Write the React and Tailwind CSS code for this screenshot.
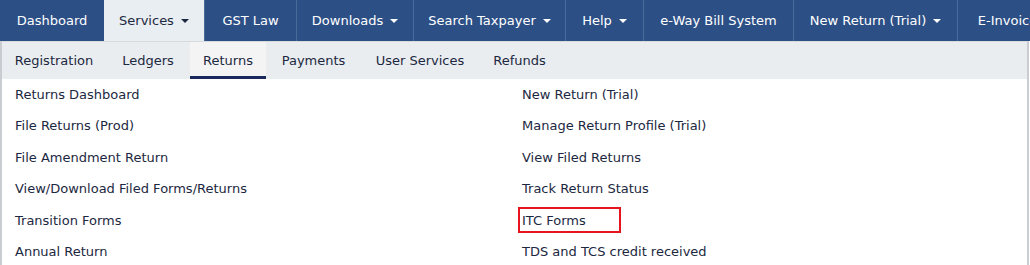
import React from 'react';

const navItems = [
  { label: 'Dashboard', w: 104 },
  { label: 'Services', w: 100, caret: true, active: true },
  { label: 'GST Law', w: 92 },
  { label: 'Downloads', w: 117, caret: true },
  { label: 'Search Taxpayer', w: 152, caret: true },
  { label: 'Help', w: 78, caret: true },
  { label: 'e-Way Bill System', w: 150 },
  { label: 'New Return (Trial)', w: 164, caret: true },
  { label: 'E-Invoice', w: 100 },
];

const tabs = [
  { label: 'Registration', w: 104 },
  { label: 'Ledgers', w: 84 },
  { label: 'Returns', w: 76, active: true },
  { label: 'Payments', w: 95 },
  { label: 'User Services', w: 118 },
  { label: 'Refunds', w: 81 },
];

const leftLinks = [
  'Returns Dashboard',
  'File Returns (Prod)',
  'File Amendment Return',
  'View/Download Filed Forms/Returns',
  'Transition Forms',
  'Annual Return',
];

const rightLinks = [
  'New Return (Trial)',
  'Manage Return Profile (Trial)',
  'View Filed Returns',
  'Track Return Status',
  'ITC Forms',
  'TDS and TCS credit received',
];

function Caret({ dark }) {
  return (
    <span
      className={`ml-[7px] inline-block h-0 w-0 border-x-[4px] border-t-[4px] border-x-transparent ${
        dark ? 'border-t-[#1c2841]' : 'border-t-white'
      }`}
    />
  );
}

export default function App() {
  return (
    <div
      className="h-[265px] w-[1030px] overflow-hidden bg-white text-[13px]"
      style={{ fontFamily: '"DejaVu Sans", Verdana, sans-serif' }}
    >
      <nav className="flex h-[41px] bg-[#2c4f86]">
        {navItems.map((item, i) => (
          <div
            key={item.label}
            style={{ width: item.w }}
            className={`flex shrink-0 items-center justify-center whitespace-nowrap ${
              item.active ? 'bg-[#e9eef2] text-[#1c2841]' : 'text-white'
            } ${i > 1 ? 'border-l border-[#4a6a9c]' : ''}`}
          >
            {item.label}
            {item.caret && <Caret dark={item.active} />}
          </div>
        ))}
      </nav>

      <div className="h-[224px] w-[1029px] border-x-2 border-t border-x-[#c9cdd1] border-t-[#d6dadd]">
        <div className="flex h-[37px] bg-[#e9edf0] text-[#1c2841]">
          {tabs.map((tab) => (
            <div
              key={tab.label}
              style={{ width: tab.w }}
              className={`flex shrink-0 items-center justify-center whitespace-nowrap ${
                tab.active ? 'border-b-[3px] border-[#1b2a5e] bg-[#f4f4f4] pt-[3px]' : ''
              }`}
            >
              {tab.label}
            </div>
          ))}
        </div>

        <div className="grid grid-cols-[505px_1fr] text-[#1c2841]">
          <ul>
            {leftLinks.map((link) => (
              <li key={link} className="flex h-[31.4px] items-center pl-[13px]">
                {link}
              </li>
            ))}
          </ul>
          <ul>
            {rightLinks.map((link) => (
              <li key={link} className="flex h-[31.4px] items-center pl-[15px]">
                {link === 'ITC Forms' ? (
                  <span className="-ml-[4px] flex h-[26px] w-[103px] items-center border-2 border-[#e8141e] pl-[2px]">
                    {link}
                  </span>
                ) : (
                  link
                )}
              </li>
            ))}
          </ul>
        </div>
      </div>
    </div>
  );
}
